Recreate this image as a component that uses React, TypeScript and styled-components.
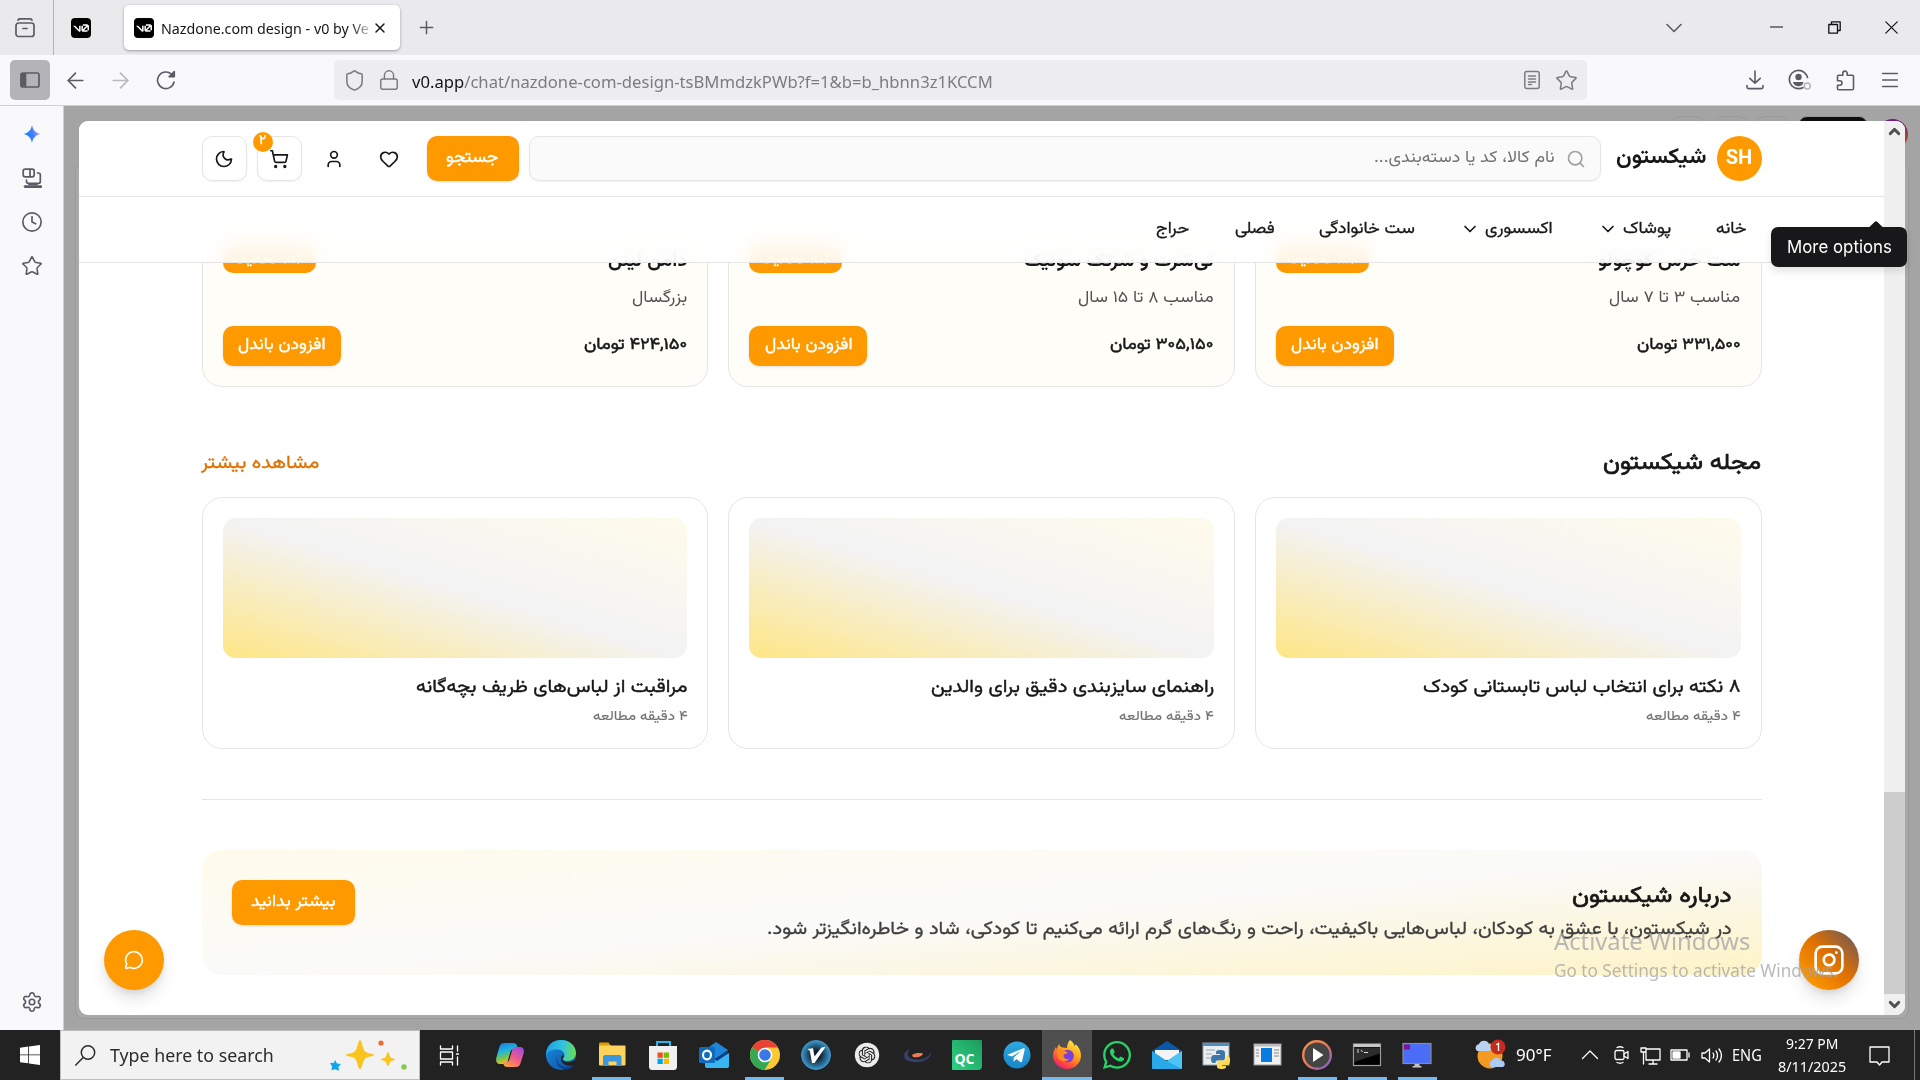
import React, { useLayoutEffect, useRef, useState } from 'react';
import styled, { createGlobalStyle, css } from 'styled-components';
import {
  Heart, User, ShoppingCart, Moon, Search, ChevronDown, ChevronUp, MessageCircle, Instagram,
  Star, Clock, Settings, Shield, Lock, X, Plus, ArrowLeft, ArrowRight, Menu,
} from 'lucide-react';
import { FaWhatsapp } from 'react-icons/fa';
import { SiOpenai } from 'react-icons/si';

const FA = "'Vazirmatn', 'DejaVu Sans', sans-serif";
const UI = "'Segoe UI', 'Noto Sans', 'Open Sans', sans-serif";
const ORANGE = '#fe9a00';

const Global = createGlobalStyle`
  * { box-sizing: border-box; }
  body { margin: 0; background: #f9f9fb; overflow: hidden; font-family: ${UI}; }
  svg { display: block; flex: none; }
`;

/* ---------- text that keeps a given measure ---------- */
const FitBox = styled.span<{ $w: number }>`
  display: flex;
  flex: none;
  width: ${p => p.$w}px;
  white-space: nowrap;
`;
const FitInner = styled.span<{ $rtl: boolean }>`
  flex: none;
  transform-origin: ${p => (p.$rtl ? 'right' : 'left')} center;
`;
function Fit({ w, rtl = false, children }: { w: number; rtl?: boolean; children: React.ReactNode }) {
  const ref = useRef<HTMLSpanElement>(null);
  const [k, setK] = useState(1);
  useLayoutEffect(() => {
    if (ref.current) setK(w / ref.current.offsetWidth);
  }, [w]);
  return (
    <FitBox $w={w} dir={rtl ? 'rtl' : 'ltr'}>
      <FitInner ref={ref} $rtl={rtl} style={{ transform: `scaleX(${k})` }}>{children}</FitInner>
    </FitBox>
  );
}

/* ---------- window ---------- */
const Screen = styled.div`
  width: 1920px;
  height: 1080px;
  display: grid;
  grid-template-rows: 55px 50px 925px 50px;
  overflow: hidden;
`;

const TabStrip = styled.div`
  display: flex;
  align-items: center;
  background: #eaeaed;
  color: #5b5b66;
`;
const TabOverview = styled.div`
  width: 54px;
  height: 55px;
  padding-left: 15px;
  display: flex;
  align-items: center;
  border-right: 1px solid #b3b3b8;
`;
const PinnedTab = styled.div`
  width: 70px;
  padding-left: 17px;
`;
const Favicon = styled.div`
  width: 20px;
  height: 20px;
  border-radius: 4px;
  background: #000;
  display: grid;
  place-items: center;
`;
const Tab = styled.div`
  width: 276px;
  height: 45px;
  border-radius: 5px;
  background: #fff;
  box-shadow: 0 1px 3px rgba(0, 0, 0, 0.35);
  display: flex;
  align-items: center;
  padding: 0 12px 0 10px;
  color: #15141a;
`;
const TabTitle = styled.div`
  width: 209px;
  margin: 0 3px 0 7px;
  font-size: 15px;
  mask-image: linear-gradient(to right, #000 190px, transparent 214px);
`;
const NewTab = styled.div`
  margin-left: 16px;
`;
const WindowButtons = styled.div`
  margin-left: auto;
  display: flex;
  align-items: center;
  color: #111;
`;
const Slot = styled.div<{ $w: number; $c?: string }>`
  width: ${p => p.$w}px;
  flex: none;
  display: grid;
  place-items: center;
  color: ${p => p.$c ?? 'inherit'};
`;

const Toolbar = styled.div`
  display: flex;
  align-items: center;
  background: #f9f9fb;
  padding-left: 10px;
  color: #5b5b66;
`;
const SidebarToggle = styled.div`
  width: 40px;
  height: 40px;
  border-radius: 5px;
  background: #b4b4b8;
  display: grid;
  place-items: center;
  margin-right: 3px;
`;
const UrlBar = styled.div`
  width: 1253px;
  height: 40px;
  margin-left: 146px;
  border-radius: 5px;
  background: #ededf0;
  display: flex;
  align-items: center;
  padding: 0 9px;
  font-size: 17px;
  color: #7b7b83;
`;
const UrlText = styled.div`
  margin: 3px auto 0 12px;
  b { font-weight: 400; color: #15141a; }
`;
const ToolbarEnd = styled.div`
  margin-left: auto;
  display: flex;
  align-items: center;
  padding-right: 8px;
`;

const Body = styled.div`
  display: grid;
  grid-template-columns: 64px 1856px;
  border-top: 1px solid #cfcfd4;
`;
const Rail = styled.div`
  display: flex;
  flex-direction: column;
  align-items: center;
  gap: 22px;
  padding: 17px 0 17px;
  background: #f9f9fb;
  border-right: 1px solid #d0d0d4;
  color: #5b5b66;
`;
const RailIcon = styled.div<{ $last?: boolean }>`
  width: 22px;
  height: 22px;
  display: grid;
  place-items: center;
  ${p => p.$last && css`margin-top: auto;`}
`;
const Backdrop = styled.div`
  position: relative;
  background: #a4a4a4;
  padding: 15px;
  overflow: hidden;
`;
const Ghost = styled.div<{ $x: number; $y: number; $w: number; $h: number; $bg?: string; $r?: number }>`
  position: absolute;
  left: ${p => p.$x}px;
  top: ${p => p.$y}px;
  width: ${p => p.$w}px;
  height: ${p => p.$h}px;
  border-radius: ${p => p.$r ?? 9}px;
  border: ${p => (p.$r === 16 ? 0 : 1)}px solid #999;
  background: ${p => p.$bg ?? 'transparent'};
`;
const Modal = styled.div`
  position: relative;
  isolation: isolate;
  width: 1826px;
  height: 894px;
  border-radius: 9px;
  overflow: hidden;
  display: grid;
  grid-template-columns: 1805px 21px;
  background: #fff;
`;

const Scrollbar = styled.div`
  display: grid;
  grid-template-rows: 21px 650px 202px 21px;
  background: #f0f0f0;
  color: #505050;
`;
const Thumb = styled.div`
  background: #cdcdcd;
`;
const Arrow = styled.div`
  display: grid;
  place-items: center;
`;

/* ---------- shop page ---------- */
const Page = styled.div`
  position: relative;
  direction: rtl;
  font-family: ${FA};
  color: #171717;
  overflow: hidden;
`;
const Header = styled.header`
  position: absolute;
  inset: 0 0 auto 0;
  z-index: 2;
  height: 142px;
  background: rgba(255, 255, 255, 0.87);
  backdrop-filter: blur(10px);
  border-bottom: 1px solid #e5e5e5;
`;
const HeaderRow = styled.div`
  height: 76px;
  padding: 15px 122.5px;
  display: flex;
  border-bottom: 1px solid #e5e5e5;
`;
const Logo = styled.div`
  width: 45px;
  height: 45px;
  border-radius: 50%;
  background: ${ORANGE};
  color: #fff;
  display: grid;
  place-items: center;
  font: 700 20px/1 Roboto, sans-serif;
  padding-bottom: 3px;
`;
const Brand = styled.div`
  margin: 0 10px 0 16px;
  font-size: 21.5px;
  line-height: 44px;
  font-weight: 700;
`;
const SearchBox = styled.div`
  flex: 1;
  height: 45px;
  border: 1px solid #e5e5e5;
  border-radius: 10px;
  background: #fafafa;
  box-shadow: 0 1px 2px rgba(0, 0, 0, 0.06);
  display: flex;
  padding: 0 14px;
  gap: 11px;
  color: #a1a1a1;
  align-items: center;
`;
const Placeholder = styled.span`
  font-size: 16.5px;
  color: #737373;
  padding-bottom: 1px;
`;
const Button = styled.div<{ $w: number; $h: number; $fs?: number }>`
  width: ${p => p.$w}px;
  height: ${p => p.$h}px;
  flex: none;
  border-radius: 10px;
  background: ${ORANGE};
  color: #fff;
  font-size: ${p => p.$fs ?? 16.5}px;
  -webkit-text-stroke: 0.35px #fff;
  display: flex;
  align-items: center;
  justify-content: center;
  padding-bottom: 2px;
  box-shadow: 0 1px 3px rgba(0, 0, 0, 0.12);
`;
const Actions = styled.div`
  display: flex;
  gap: 10px;
  margin-right: 15px;
`;
const IconButton = styled.div<{ $framed?: boolean }>`
  position: relative;
  width: 45px;
  height: 45px;
  border-radius: 10px;
  display: grid;
  place-items: center;
  ${p => p.$framed && css`
    border: 1px solid #e5e5e5;
    background: #fff;
    box-shadow: 0 1px 2px rgba(0, 0, 0, 0.06);
  `}
`;
const CartBadge = styled.span`
  position: absolute;
  left: -5px;
  top: -5px;
  width: 20px;
  height: 20px;
  border-radius: 50%;
  background: ${ORANGE};
  color: #fff;
  font-size: 13.5px;
  line-height: 17px;
  text-align: center;
  -webkit-text-stroke: 0.4px #fff;
`;
const Nav = styled.nav`
  height: 65px;
  padding: 0 137.5px 1px;
  display: flex;
  gap: 44.8px;
  align-items: center;
  font-size: 16.5px;
  -webkit-text-stroke: 0.3px #171717;
`;
const NavItem = styled.div`
  display: flex;
  align-items: center;
  gap: 5px;
`;

const Main = styled.main`
  padding: 104px 122.5px 0;
`;
const Grid = styled.div`
  display: grid;
  grid-template-columns: repeat(3, 1fr);
  gap: 20px;
`;
const Bundle = styled.article`
  height: 162px;
  padding: 20px;
  border: 1px solid #e5e5e5;
  border-radius: 20px;
  background: #fffdf8;
`;
const Between = styled.div<{ $h: number; $mt?: number; $mb?: number }>`
  display: flex;
  align-items: center;
  justify-content: space-between;
  height: ${p => p.$h}px;
  margin-top: ${p => p.$mt ?? 0}px;
  margin-bottom: ${p => p.$mb ?? 0}px;
`;
const BundleTitle = styled.div`
  font-size: 18.5px;
  font-weight: 700;
  padding-top: 3px;
`;
const Discount = styled.div`
  width: 93px;
  height: 27px;
  border-radius: 10px;
  background: ${ORANGE};
  color: #fff;
  font-size: 15px;
  display: grid;
  place-items: center;
  -webkit-text-stroke: 0.3px #fff;
`;
const BundleNote = styled.div`
  margin-top: 9px;
  font-size: 16.5px;
  line-height: 33px;
  height: 30px;
  color: #525252;
`;
const Price = styled.div`
  font-size: 16.5px;
  padding-bottom: 2px;
  -webkit-text-stroke: 0.5px #171717;
`;
const SectionTitle = styled.h2`
  margin: 0;
  font-size: 23px;
  font-weight: 400;
  -webkit-text-stroke: 0.7px #171717;
`;
const MoreLink = styled.a`
  font-size: 18.5px;
  color: #e17100;
  -webkit-text-stroke: 0.3px #e17100;
`;
const Post = styled.article`
  height: 252px;
  padding: 20px;
  border: 1px solid #e5e5e5;
  border-radius: 20px;
`;
const Cover = styled.div`
  height: 140px;
  border-radius: 12.5px;
  background: linear-gradient(to bottom left, #fffbeb, #f3f3f4 50%, #fee685);
`;
const PostTitle = styled.div`
  margin-top: 14px;
  font-size: 18.5px;
  line-height: 32px;
  -webkit-text-stroke: 0.4px #171717;
`;
const PostMeta = styled.div`
  font-size: 13.8px;
  line-height: 26px;
  color: #737373;
  -webkit-text-stroke: 0.15px #737373;
`;
const Divider = styled.hr`
  margin: 50px 0;
  border: 0;
  height: 1px;
  background: #e5e5e5;
`;
const About = styled.section`
  height: 125px;
  border-radius: 20px;
  padding: 30px;
  display: flex;
  justify-content: space-between;
  background: linear-gradient(to bottom right, #fffbeb, #fafafa 50%, #fef3c6);
`;
const AboutTitle = styled.h3`
  margin: 0;
  font-size: 22.5px;
  line-height: 34px;
  font-weight: 400;
  -webkit-text-stroke: 0.7px #171717;
`;
const AboutText = styled.p`
  margin: 0;
  font-size: 18.5px;
  line-height: 32px;
  color: #404040;
  -webkit-text-stroke: 0.3px #404040;
`;
const Fab = styled.div<{ $side: 'left' | 'right' }>`
  position: absolute;
  z-index: 3;
  ${p => p.$side}: 25px;
  bottom: 25px;
  width: 60px;
  height: 60px;
  border-radius: 50%;
  color: #fff;
  display: grid;
  place-items: center;
  background: ${p => (p.$side === 'left' ? ORANGE : 'linear-gradient(45deg, #fe9a00 10%, #e17100 52%, #525270 105%)')};
  box-shadow: 0 10px 18px -3px rgba(0, 0, 0, 0.14), 0 4px 8px -4px rgba(0, 0, 0, 0.14);
`;

const Tooltip = styled.div`
  position: absolute;
  z-index: 5;
  left: 1707px;
  top: 121px;
  width: 136px;
  height: 40px;
  border-radius: 7px;
  background: #18181b;
  color: #fff;
  font: 400 17.5px/40px Inter, sans-serif;
  padding-left: 15.5px;
  box-shadow: 0 4px 8px rgba(0, 0, 0, 0.12);
  &::before {
    content: '';
    position: absolute;
    left: 99px;
    top: -4px;
    width: 12px;
    height: 12px;
    background: #18181b;
    border-radius: 2px;
    transform: rotate(45deg);
  }
`;
const Watermark = styled.div`
  position: absolute;
  z-index: 6;
  left: 1490px;
  top: 818px;
  color: rgba(165, 165, 165, 0.78);
  font-size: 24px;
  line-height: 34px;
`;
const WatermarkNote = styled.div`
  font-size: 18px;
  line-height: 24px;
`;

/* ---------- taskbar ---------- */
const Taskbar = styled.div`
  display: flex;
  background: #222;
  color: #fff;
`;
const StartButton = styled.div`
  width: 60px;
  display: grid;
  place-items: center;
`;
const TaskSearch = styled.div`
  width: 360px;
  border: 1px solid #bdbdbd;
  background: #f2f2f2;
  color: #2b2b2b;
  display: flex;
  align-items: center;
  padding-left: 14px;
  font-size: 18px;
`;
const TaskSearchText = styled.div`
  margin: 0 auto 0 14px;
`;
const TaskApp = styled.div<{ $active?: boolean; $run?: boolean; $wide?: boolean }>`
  width: ${p => (p.$wide ? 51 : 50)}px;
  flex: none;
  display: grid;
  place-items: center;
  padding-top: 3px;
  border-bottom: 3px solid transparent;
  background: ${p => (p.$active ? '#4e4e4e' : p.$run ? 'linear-gradient(#76b9ed, #76b9ed) center bottom / 39px 3px no-repeat border-box' : 'none')};
  ${p => p.$active && css`border-bottom-color: #76b9ed;`}
`;
const Tray = styled.div`
  margin-left: auto;
  display: flex;
  align-items: center;
  font-size: 16px;
`;
const ClockText = styled.div`
  width: 100px;
  display: flex;
  flex-direction: column;
  align-items: center;
  font-size: 15px;
  line-height: 23px;
`;
const ShowDesktop = styled.div`
  width: 6px;
  height: 50px;
  border-left: 1px solid #777;
`;

const V0 = () => (
  <Favicon>
    <svg width="16" height="8" viewBox="0 0 147 70" fill="#fff">
      <path d="M56 50.2031V14H70V60.1562C70 65.5928 65.5928 70 60.1562 70C57.5605 70 54.9982 68.9992 53.1562 67.1573L0 14H19.7969L56 50.2031Z" />
      <path d="M147 56H133V23.9531L100.953 56H133V70H96.6875C85.8144 70 77 61.1856 77 50.3125V14H91V46.1562L123.156 14H91V0H127.312C138.186 0 147 8.81439 147 19.6875V56Z" />
    </svg>
  </Favicon>
);

const Line = ({ s = 20, w = 1.6, vb = 20, children }: { s?: number; w?: number; vb?: number; children: React.ReactNode }) => (
  <svg width={s} height={s} viewBox={`0 0 ${vb} ${vb}`} fill="none" stroke="currentColor" strokeWidth={w} strokeLinecap="round" strokeLinejoin="round">{children}</svg>
);
const Art = ({ children }: { children: React.ReactNode }) => (
  <svg width="30" height="30" viewBox="0 0 30 30">{children}</svg>
);

const copilot = (
  <Art>
    <defs>
      <linearGradient id="cpA" x1="0" y1="0" x2="0.3" y2="1"><stop offset="0" stopColor="#1573e0" /><stop offset="0.45" stopColor="#21b6dd" /><stop offset="0.75" stopColor="#7cc24a" /><stop offset="1" stopColor="#f5c518" /></linearGradient>
      <linearGradient id="cpB" x1="0.8" y1="0" x2="0.2" y2="1"><stop offset="0" stopColor="#a34bdc" /><stop offset="0.5" stopColor="#ee5a8e" /><stop offset="1" stopColor="#fda23c" /></linearGradient>
    </defs>
    <path d="M9 3h9c2.500 0 3.500 1 4.200 3.400L23 9h-4c-2 0-3 1-3.600 3l-2.800 9.500C12 23.500 11 24 9 24H5c-3.500 0-4.500-3-3.600-6.500l3-10.500C5.200 4.500 6.500 3 9 3z" fill="url(#cpA)" />
    <path d="M21 27h-8.500c-2.500 0-3.500-1-4.200-3.200L7.800 22H11c2 0 3-1 3.600-3l2.800-9.500C18 7.500 19 7 21 7h4c3.500 0 4.500 3 3.600 6.500l-3 9.500c-.8 2.700-2 4-4.600 4z" fill="url(#cpB)" />
  </Art>
);
const edge = (
  <Art>
    <defs>
      <linearGradient id="eg" x1="0" y1="0.3" x2="1" y2="0.4"><stop offset="0" stopColor="#1b9de2" /><stop offset="0.55" stopColor="#33c3e0" /><stop offset="1" stopColor="#66dd55" /></linearGradient>
      <linearGradient id="eh" x1="0" y1="0" x2="1" y2="1"><stop offset="0" stopColor="#1a8fe0" /><stop offset="1" stopColor="#0c4a9e" /></linearGradient>
    </defs>
    <circle cx="15" cy="15" r="15" fill="url(#eh)" />
    <path d="M0 13C1 5 7 0 15 0c9 0 15 6 15 13 0 5-4 8-8.500 8-3 0-4.500-1-4.500-2s1.500-1.500 1.500-4c0-3-3-5.500-7-5.500C6 9.500 1 11 0 16z" fill="url(#eg)" />
    <path d="M11 16c-1 5 2 11 9 11 4 0 6-1.200 8-2.500-1.500 3-5 5.500-9 5.500 4-1 2-1 0-1-7-.5-10-8-8-13z" fill="#103f86" />
    <path d="M18 15c0 2-1.500 3-1.500 4.200 0 1.500 2 3 5.500 3 3 0 5.500-.8 8.500-2.700 0 2-1.500 4.500-3.500 5.500-6 2-12-1-12-6 0-3 1-4 3-4z" fill="#222" />
  </Art>
);
const explorer = (
  <Art>
    <path d="M2 4c0-.8.500-1.500 1.500-1.500h8L14 6h-12z" fill="#e09e00" />
    <rect x="2" y="5.500" width="26.500" height="20" rx="1" fill="#ffd35c" />
    <path d="M6 26V17c0-1 .8-2 2-2h14.500c1.200 0 2 1 2 2v9h-5v-4.500h-8V26z" fill="#3a97dc" />
  </Art>
);
const store = (
  <Art>
    <path d="M9 7V2h13v5" fill="none" stroke="#28b6ee" strokeWidth="2" />
    <path d="M1 6h28v20.500c0 2-1 3.500-3 3.500H4c-2 0-3-1.500-3-3.500z" fill="#f0f0f0" />
    <path d="M9.500 12.500h5.300v5.300H9.500z" fill="#f25022" /><path d="M15.700 12.500H21v5.300h-5.300z" fill="#7fba00" /><path d="M9.500 18.700h5.300V24H9.500z" fill="#00a4ef" /><path d="M15.700 18.700H21V24h-5.300z" fill="#ffb900" />
  </Art>
);
const outlook = (
  <Art>
    <path d="M6 10 17 2l12 8v8H6z" fill="#1f86d8" /><path d="M29 10 14 20l15 6z" fill="#0d3f86" /><path d="M6 14l12 7 12-8v13c0 1.500-1 2-2 2H8c-1.500 0-2-1-2-2z" fill="#36b5ef" />
    <rect x="0" y="7" width="16" height="16" rx="1.500" fill="#0f6cbd" /><ellipse cx="8" cy="15" rx="4" ry="4.400" fill="none" stroke="#fff" strokeWidth="2.200" />
  </Art>
);
const chrome = (
  <Art>
    <circle cx="15" cy="15" r="15" fill="#fcc934" />
    <path d="M15 15 2 7.500A15 15 0 0 1 28 7.500H15z" fill="#ea4335" />
    <path d="M2 7.500A15 15 0 0 0 14.500 30L21.500 18.500 15 15z" fill="#34a853" />
    <circle cx="15" cy="15" r="7.300" fill="#fff" /><circle cx="15" cy="15" r="5.800" fill="#3b78e7" />
  </Art>
);
const vApp = (
  <Art>
    <defs><radialGradient id="va"><stop offset="0.3" stopColor="#0d2231" /><stop offset="0.95" stopColor="#3a8fc0" /></radialGradient></defs>
    <circle cx="15" cy="15" r="14.500" fill="url(#va)" stroke="#3c94c8" /><path d="M6.500 9 12 8.300l1.500 8.200L20.500 7.500l4-.5L13.500 23H11L8.800 10.800z" fill="#fff" />
  </Art>
);
const chatgpt = (
  <Art><circle cx="15" cy="15" r="12.200" fill="#ececec" /><g transform="translate(6.500 6.500)"><SiOpenai size={17} color="#222" /></g></Art>
);
const orbit = (
  <Art><path d="M8 9c-8 3-9 12 4 13 9 .7 17-3 17-10-2 5-8 8-15 7.500-9-.6-10-6-6-10.500z" fill="#35416d" /><path d="M10 15c3-2 8-2.300 11-1.500-.5 3-6 4.500-10 3.500z" fill="#f47a55" /></Art>
);
const IconLabel = styled.div`
  width: 30px;
  height: 30px;
  border-radius: 1px 1px 4px 1px;
  background: linear-gradient(to top right, #2dd385, #1d9a5c);
  font: 700 14px/37px 'Open Sans', sans-serif;
  text-align: center;
  padding-right: 5px;
`;
const telegram = (
  <Art><defs><linearGradient id="tg" x1="0" y1="0" x2="0" y2="1"><stop offset="0" stopColor="#2fa9e2" /><stop offset="1" stopColor="#1886c6" /></linearGradient></defs><circle cx="15" cy="15" r="13.500" fill="url(#tg)" /><path d="m6 14.500 15.500-6.200c.8-.3 1.400.2 1.200 1.200l-2.600 11.800c-.2 1-.9 1.200-1.700.7l-4-3-2 2c-.3.300-.5.400-.9.400l.3-4 7.400-6.700-9.200 5.800-3.800-1.200c-.8-.2-.9-.6-.2-.8z" fill="#fff" /></Art>
);
const firefox = (
  <Art>
    <defs><linearGradient id="ff" x1="0.8" y1="0" x2="0.2" y2="1"><stop offset="0" stopColor="#fff04a" /><stop offset="0.4" stopColor="#ffa41c" /><stop offset="0.75" stopColor="#ff4a3f" /><stop offset="1" stopColor="#e31587" /></linearGradient></defs>
    <path d="M18 0c3 2 4 4 4.500 6 1-.5 1-1 1-2C27 7 29 11 29 15.500 29 23 23 29 15 29S1 23 1 15.500C1 12 2.500 9 4 7c0 1 0 1.500.5 2L7 4c.5 1.500 1.500 3 3.500 3.500L15 8c0-3 1-6 3-8z" fill="url(#ff)" />
    <circle cx="15.500" cy="16" r="6.300" fill="#7a3fd6" /><path d="M5 11c3-2 6-1 8 0l3 1.500c-1.500 1.500-4 1.500-4.500 3 0 3 3 4.500 6 3.500-3 4-10 3-12-2z" fill="#ff8b20" />
  </Art>
);
const mail = (
  <Art><path d="M0 11 15 1l15 10v6H0z" fill="#0b58a8" /><path d="M3 10h24v10H3z" fill="#f4f4f4" /><path d="M0 11l15 10 15-10v17c0 .6-.4 1-1 1H1c-.6 0-1-.4-1-1z" fill="#29a8ea" /><path d="M30 11v18L15 21z" fill="#4cc4f5" /></Art>
);
const python = (
  <Art>
    <rect x="1" y="3" width="26" height="22" fill="#e9edef" stroke="#9aa5aa" /><rect x="1" y="3" width="26" height="3" fill="#4a90c2" /><path d="M4 10h9M4 14h6M4 18h5" stroke="#b8c0c4" strokeWidth="1.500" />
    <path d="M18 10c4 0 5 1 5 3v5c0 1.500-1 2.500-2.500 2.500h-5c-1.500 0-2 1-2 2.500h-2c-2 0-2.500-2-2.500-4s1-4 3-4h6v-1h-4v-2c0-1.300 1.500-2 4-2z" fill="#3c78aa" />
    <path d="M20 29c-4 0-5-1-5-2.500v-4c0-1.500 1-2 2.500-2H22c1.500 0 2.500-1 2.500-3V16h1c2 0 2.500 2 2.500 4.500S27 25 25 25h-5v1h4v1c0 1.300-1.500 2-4 2z" fill="#ffdc51" />
  </Art>
);
const winApp = (
  <Art><rect x="2" y="4" width="27" height="21" fill="#f1f1f1" stroke="#999" /><rect x="2" y="4" width="27" height="2.500" fill="#bbb" /><rect x="9" y="8" width="11" height="14" fill="#0a7be0" /><path d="M4 10h3M4 13h3M4 16h3M22 10h5M22 13h5M22 16h5" stroke="#888" /></Art>
);
const player = (
  <Art><defs><linearGradient id="pl" x1="0" y1="0" x2="1" y2="1"><stop offset="0" stopColor="#ff9040" /><stop offset="0.5" stopColor="#e0795e" /><stop offset="1" stopColor="#7a58e0" /></linearGradient></defs><circle cx="15" cy="15" r="13.800" fill="#444" stroke="url(#pl)" strokeWidth="2.400" /><path d="M11 8v14l10.500-7z" fill="#fff" /></Art>
);
const cmd = (
  <Art><rect x="1.500" y="4" width="27" height="21.500" fill="#000" stroke="#9c9c9c" strokeWidth="1.200" /><rect x="2" y="4" width="26" height="3" fill="#c8c8c8" /><path d="M2 7.500h26v6L2 22z" fill="#2c2c2c" /><path d="M5 10h2M5 12h2M9 10l1.500 2M12 12.500h4" stroke="#ddd" /></Art>
);
const monitor = (
  <Art><rect x="1" y="3.500" width="28" height="20" fill="#4a6cf7" stroke="#8c8c8c" strokeWidth="1.200" /><path d="M2 4.500h6v5H2z" fill="#7c1596" /><path d="M12.500 24h5v2h2v1.500h-9V26h2z" fill="#c4c4c4" /></Art>
);

const apps: { icon: React.ReactNode; run?: boolean; active?: boolean }[] = [
  { icon: copilot }, { icon: edge }, { icon: explorer, run: true }, { icon: store }, { icon: outlook },
  { icon: chrome, run: true }, { icon: vApp }, { icon: chatgpt }, { icon: orbit },
  { icon: <IconLabel>QC</IconLabel> }, { icon: telegram }, { icon: firefox, active: true },
  { icon: <FaWhatsapp size={32} color="#25d366" /> }, { icon: mail }, { icon: python }, { icon: winApp },
  { icon: player, run: true }, { icon: cmd, run: true }, { icon: monitor, run: true },
];

const bundles = [
  { title: 'ست خرس کوچولو', tw: 143, note: 'مناسب ۳ تا ۷ سال', nw: 131, price: '۳۳۱,۵۰۰ تومان', pw: 104 },
  { title: 'تی‌شرت و شرتک سونیک', tw: 189, note: 'مناسب ۸ تا ۱۵ سال', nw: 136, price: '۳۰۵,۱۵۰ تومان', pw: 103 },
  { title: 'دامن لینن', tw: 79, note: 'بزرگسال', nw: 55, price: '۴۲۴,۱۵۰ تومان', pw: 103 },
];
const posts = [
  { title: '۸ نکته برای انتخاب لباس تابستانی کودک', w: 318 },
  { title: 'راهنمای سایزبندی دقیق برای والدین', w: 283 },
  { title: 'مراقبت از لباس‌های ظریف بچه‌گانه', w: 272 },
];
const nav = [
  { label: 'خانه', w: 31 }, { label: 'پوشاک', w: 48, sub: true }, { label: 'اکسسوری', w: 68, sub: true },
  { label: 'ست خانوادگی', w: 96 }, { label: 'فصلی', w: 40 }, { label: 'حراج', w: 33 },
];

export default function App() {
  return (
    <>
      <Global />
      <Screen>
        <TabStrip>
          <TabOverview>
            <Line w={1.7}><path d="M3 2.200C3.300 1.200 4 .8 5 .8h10c1 0 1.700.4 2 1.400" /><rect x="1" y="5" width="18" height="13.500" rx="2.500" /><path d="M8 10.500h4" /></Line>
          </TabOverview>
          <PinnedTab><V0 /></PinnedTab>
          <Tab>
            <V0 />
            <TabTitle><Fit w={208}>Nazdone.com design - v0 by Ve</Fit></TabTitle>
            <X size={16} strokeWidth={2.200} />
          </Tab>
          <NewTab><Plus size={21} strokeWidth={1.700} /></NewTab>
          <WindowButtons>
            <Slot $w={148} $c="#5b5b66"><ChevronDown size={28} strokeWidth={1.400} /></Slot>
            <Slot $w={57}><Line s={13} vb={13} w={1.200}><path d="M.5 6h12" /></Line></Slot>
            <Slot $w={58}><Line s={13} vb={13} w={1.300}><path d="M.8 3.500h8.700v8.700H.8zM3.500 3.500V.8h8.700v8.700H9.500" /></Line></Slot>
            <Slot $w={57}><Line s={13} vb={13} w={1.200}><path d="M.8.8l11.400 11.400M12.200.8.8 12.200" /></Line></Slot>
          </WindowButtons>
        </TabStrip>

        <Toolbar>
          <SidebarToggle>
            <Line w={1.700}><rect x="1" y="3" width="18" height="14" rx="2" /><path d="M1.500 4h4v12h-4z" fill="currentColor" /></Line>
          </SidebarToggle>
          <Slot $w={45}><ArrowLeft size={25} strokeWidth={1.600} /></Slot>
          <Slot $w={45} $c="#b8b8be"><ArrowRight size={25} strokeWidth={1.600} /></Slot>
          <Slot $w={45}>
            <Line w={1.600}><path d="M18 12A8.300 8.300 0 1 1 15.500 4.200L18 6.200" /><path d="M18.300 1.500v5.200h-5.200z" fill="currentColor" /></Line>
          </Slot>
          <UrlBar>
            <Shield size={23} strokeWidth={1.600} />
            <Slot $w={12} /><Lock size={22} strokeWidth={1.600} />
            <UrlText><Fit w={581}><span><b>v0.app</b>/chat/nazdone-com-design-tsBMmdzkPWb?f=1&amp;b=b_hbnn3z1KCCM</span></Fit></UrlText>
            <Line s={20} w={1.500}><rect x="2.800" y="1.500" width="14.400" height="17" rx="2" /><path d="M6.500 6h7M6.500 9h7M6.500 12h7M6.500 14.500h3" /></Line>
            <Slot $w={13} /><Star size={23} strokeWidth={1.600} />
          </UrlBar>
          <ToolbarEnd>
            <Slot $w={45}><Line s={20} w={1.600}><path d="M10 1v12M4.800 8.300 10 13.200l5.200-4.900M2 15.500V17c0 1 .7 1.600 1.600 1.600h12.800c.9 0 1.600-.6 1.600-1.600v-1.500" /></Line></Slot>
            <Slot $w={46}>
              <svg width="24" height="22" viewBox="0 0 24 22"><circle cx="10.500" cy="10.500" r="9.200" fill="none" stroke="currentColor" strokeWidth="1.700" strokeDasharray="47 10.800" strokeDashoffset="-9" /><circle cx="10.500" cy="8" r="3.200" fill="currentColor" /><path d="M5 13h10.500c-.5 3-2.500 4.200-5 4.200S5.500 16 5 13z" fill="currentColor" /><circle cx="19.300" cy="17" r="3" fill="#f9f9fb" stroke="#b5b5bb" strokeWidth="1.500" /></svg>
            </Slot>
            <Slot $w={45}><Line s={21} vb={21} w={1.600}><path d="M2.500 9V6.500c0-.8.600-1.300 1.300-1.300h4V3.300a2.200 2.200 0 0 1 4.400 0v1.900h5c.8 0 1.300.5 1.300 1.300v12c0 .8-.5 1.300-1.300 1.300H3.800c-.8 0-1.300-.5-1.300-1.300v-3.300h2.300a2.200 2.200 0 0 0 0-4.400H2.500z" /></Line></Slot>
            <Slot $w={44}><Menu size={22} strokeWidth={1.600} /></Slot>
          </ToolbarEnd>
        </Toolbar>

        <Body>
          <Rail>
            <RailIcon>
              <svg width="18" height="20" viewBox="0 0 18 20"><defs><linearGradient id="sp" x1="0" y1="0.500" x2="1" y2="0.300"><stop offset="0" stopColor="#0f84ff" /><stop offset="0.500" stopColor="#3d80ff" /><stop offset="1" stopColor="#c79df0" /></linearGradient></defs><path d="M9 1c1 5 3 7.500 8.500 9-5.500 1.500-7.500 4-8.500 9-1-5-3-7.500-8.500-9C6 8.500 8 6 9 1z" fill="url(#sp)" /></svg>
            </RailIcon>
            <RailIcon>
              <Line s={20} w={1.700}><rect x="1.200" y="1.200" width="11" height="7.600" rx="2" /><path d="M8 1.500v7M15.500 5h1c1 0 1.800.8 1.800 1.800V13.500c0 1-.8 1.800-1.800 1.800H6.500c-1.200 0-2-.8-2-1.800V12" /><path d="M3 18.600h16" strokeWidth="2.600" /><path d="M7 16.500h8" /></Line>
            </RailIcon>
            <RailIcon><Clock size={22} strokeWidth={1.800} /></RailIcon>
            <RailIcon><Star size={22} strokeWidth={1.700} /></RailIcon>
            <RailIcon $last><Settings size={22} strokeWidth={1.800} /></RailIcon>
          </Rail>
          <Backdrop>
            <Ghost $x={11} $y={57} $w={1834} $h={856} $bg="#a9a9a9" />
            <Ghost $x={1607} $y={10} $w={34} $h={34} />
            <Ghost $x={1650} $y={10} $w={34} $h={34} />
            <Ghost $x={1692} $y={10} $w={34} $h={34} />
            <Ghost $x={1734} $y={10} $w={70} $h={34} $bg="#0e0e0e" />
            <Ghost $x={1813} $y={13} $w={31} $h={31} $r={16} $bg="linear-gradient(#6a1b8a, #b5452a 70%)" />
            <Modal>
              <Page>
                <Header>
                  <HeaderRow>
                    <Logo>SH</Logo>
                    <Brand><Fit w={90} rtl>شیکستون</Fit></Brand>
                    <SearchBox>
                      <Search size={20} strokeWidth={2} />
                      <Placeholder><Fit w={181} rtl>نام کالا، کد یا دسته‌بندی...</Fit></Placeholder>
                    </SearchBox>
                    <Slot $w={10} />
                    <Button $w={92} $h={45} $fs={17.5}><Fit w={52} rtl>جستجو</Fit></Button>
                    <Actions>
                      <IconButton><Heart size={20} strokeWidth={2} /></IconButton>
                      <IconButton><User size={20} strokeWidth={2} /></IconButton>
                      <IconButton $framed><ShoppingCart size={20} strokeWidth={2} /><CartBadge>۲</CartBadge></IconButton>
                      <IconButton $framed><Moon size={20} strokeWidth={2} /></IconButton>
                    </Actions>
                  </HeaderRow>
                  <Nav>
                    {nav.map(n => (
                      <NavItem key={n.label}>
                        <Fit w={n.w} rtl>{n.label}</Fit>
                        {n.sub && <ChevronDown size={20} strokeWidth={2} />}
                      </NavItem>
                    ))}
                  </Nav>
                </Header>

                <Main>
                  <Grid>
                    {bundles.map(b => (
                      <Bundle key={b.title}>
                        <Between $h={27}>
                          <BundleTitle><Fit w={b.tw} rtl>{b.title}</Fit></BundleTitle>
                          <Discount><Fit w={71} rtl>۱۵٪ تخفیف</Fit></Discount>
                        </Between>
                        <BundleNote><Fit w={b.nw} rtl>{b.note}</Fit></BundleNote>
                        <Between $h={40} $mt={14}>
                          <Price><Fit w={b.pw} rtl>{b.price}</Fit></Price>
                          <Button $w={118} $h={40}><Fit w={88} rtl>افزودن باندل</Fit></Button>
                        </Between>
                      </Bundle>
                    ))}
                  </Grid>

                  <Between $h={42} $mt={55} $mb={13}>
                    <SectionTitle><Fit w={158} rtl>مجله شیکستون</Fit></SectionTitle>
                    <MoreLink><Fit w={118} rtl>مشاهده بیشتر</Fit></MoreLink>
                  </Between>
                  <Grid>
                    {posts.map(p => (
                      <Post key={p.title}>
                        <Cover />
                        <PostTitle><Fit w={p.w} rtl>{p.title}</Fit></PostTitle>
                        <PostMeta><Fit w={95} rtl>۴ دقیقه مطالعه</Fit></PostMeta>
                      </Post>
                    ))}
                  </Grid>
                  <Divider />
                  <About>
                    <div>
                      <AboutTitle><Fit w={160} rtl>درباره شیکستون</Fit></AboutTitle>
                      <AboutText><Fit w={965} rtl>در شیکستون، با عشق به کودکان، لباس‌هایی باکیفیت، راحت و رنگ‌های گرم ارائه می‌کنیم تا کودکی، شاد و خاطره‌انگیزتر شود.</Fit></AboutText>
                    </div>
                    <Button $w={123} $h={45}><Fit w={84} rtl>بیشتر بدانید</Fit></Button>
                  </About>
                </Main>
                <Fab $side="left"><MessageCircle size={20} strokeWidth={2} /></Fab>
                <Fab $side="right"><Instagram size={32} strokeWidth={2} /></Fab>
              </Page>
              <Scrollbar>
                <Arrow><ChevronUp size={17} strokeWidth={4} /></Arrow>
                <div />
                <Thumb />
                <Arrow><ChevronDown size={17} strokeWidth={4} /></Arrow>
              </Scrollbar>
            </Modal>
            <Tooltip><Fit w={105}>More options</Fit></Tooltip>
            <Watermark>
              <Fit w={196}>Activate Windows</Fit>
              <WatermarkNote><Fit w={284}>Go to Settings to activate Windows.</Fit></WatermarkNote>
            </Watermark>
          </Backdrop>
        </Body>

        <Taskbar>
          <StartButton>
            <svg width="20" height="20" viewBox="0 0 20 20" fill="#fff"><path d="M0 2.800 8.200 1.600v8H0zM9 1.500 20 0v9.600H9zM0 10.300h8.200v8L0 17.200zM9 10.300h11V20L9 18.500z" /></svg>
          </StartButton>
          <TaskSearch>
            <Line s={21} vb={21} w={1.500}><circle cx="13" cy="7.500" r="6.700" /><path d="M8.200 12.500.8 20" /></Line>
            <TaskSearchText><Fit w={164}>Type here to search</Fit></TaskSearchText>
            <svg width="90" height="34" viewBox="0 0 90 34">
              <path d="M31 2c2 0 2.500 9 5 11.500S45 15 45 17s-6.500 1-9 3.500S33 31 31 31s-2.500-8-5-10.500S17 19 17 17s6.500-1 9-3.500S29 2 31 2z" fill="#fbc31d" />
              <path d="M59 14c1 0 1.300 4 2.500 5.200S66 20.500 66 21.500s-3.300 1-4.500 2.200S60 28 59 28s-1.300-3.200-2.500-4.300S52 22.500 52 21.500s3.300-1 4.500-2.300S58 14 59 14z" fill="#fbc31d" />
              <path d="M6 22l2 3.500 4 .5-2.500 2.800.5 4-4-1.500-3.500 1 .5-3.800L1 25l4-.2z" fill="#12a5ec" />
              <circle cx="52" cy="5" r="2.600" fill="#ee6a35" /><circle cx="75" cy="29" r="2.800" fill="#8cc84b" />
            </svg>
          </TaskSearch>
          <Slot $w={59}>
            <Line s={21} vb={21} w={1.300}><path d="M1.500 1v3h12V1M1.500 20v-3h12v3M1.500 7h12v7h-12zM18.500 1v5M18.500 12v8M17.500 9h2" /></Line>
          </Slot>
          <Slot $w={5} />
          {apps.map((a, i) => <TaskApp key={i} $run={a.run} $active={a.active} $wide={i < 8}>{a.icon}</TaskApp>)}
          <Tray>
            <svg width="32" height="32" viewBox="0 0 32 32"><circle cx="15" cy="17" r="12.500" fill="#f39a20" /><path d="M2 12a4 4 0 0 1 2-7 5.500 5.500 0 0 1 10 0 4 4 0 0 1 1 7z" fill="#b9d2f2" /><path d="M16 28a3.800 3.800 0 0 1 1-6.500 5 5 0 0 1 9 0 3.500 3.500 0 0 1 2 6.500z" fill="#a9cbf5" /><circle cx="23" cy="8" r="7.500" fill="#c42b1c" /><path d="M21.300 5.800 23.500 4.500V12" stroke="#fff" strokeWidth="1.300" fill="none" /></svg>
            <Slot $w={9} />
            <Fit w={35}>90°F</Fit>
            <Slot $w={17} />
            <Slot $w={44}><Line s={18} vb={18} w={1.300}><path d="M1.500 12.500 9 5l7.500 7.500" /></Line></Slot>
            <Line s={18} vb={18} w={1.300}><rect x="3" y="4.500" width="9" height="9" rx="1.500" /><path d="M12 8l4-2.500v7L12 10M5 1.500c2-1 4-1 6 0M5 16.500c2 1 4 1 6 0" /></Line>
            <Slot $w={40}><Line s={21} vb={21} w={1.300}><path d="M6 4h14v11H6zM13 15v4M9 19h8M1 3h5v4H1zM3.500 7v12" /></Line></Slot>
            <Line s={20} vb={20} w={1.300}><path d="M1 5h16v10H1zM19 8v4" /><path d="M3 7h7v6H3z" fill="currentColor" /></Line>
            <Slot $w={42}><Line s={21} vb={21} w={1.300}><path d="M1 8h3l4.500-4v13L4 13H1zM12 8c1 1.500 1 3.500 0 5M15 6c2 2.500 2 6.500 0 9M18 4c3 4 3 9 0 13" /></Line></Slot>
            <Fit w={30}>ENG</Fit>
            <ClockText><Fit w={52}>9:27 PM</Fit><Fit w={68}>8/11/2025</Fit></ClockText>
            <Slot $w={35}><Line s={21} vb={21} w={1.300}><path d="M1 2h19v15h-7l-2.500 3L8 17H1z" /></Line></Slot>
            <Slot $w={17} />
            <ShowDesktop />
          </Tray>
        </Taskbar>
      </Screen>
    </>
  );
}
